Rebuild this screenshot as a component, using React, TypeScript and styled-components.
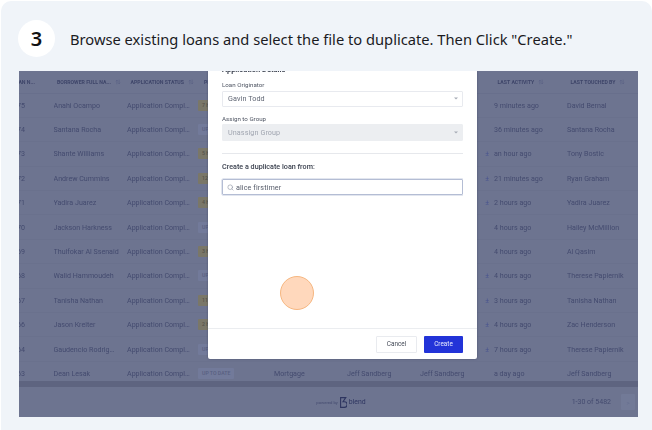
import React from 'react'
import styled, { createGlobalStyle } from 'styled-components'
import { Search } from 'lucide-react'

const GlobalStyle = createGlobalStyle`
  html, body {
    margin: 0;
    padding: 0;
    background: #ffffff;
  }
`

const COLUMNS = '34.5px 73.5px 71px 76px 73px 73px 74px 73px 71px'

type Loan = {
  id: string
  name: string
  pill: string
  warn?: boolean
  activity: string
  touched: string
  file?: boolean
}

const loans: Loan[] = [
  { id: '5475', name: 'Anahi Ocampo', pill: '7 HOURS', warn: true, activity: '9 minutes ago', touched: 'David Bernal' },
  { id: '5474', name: 'Santana Rocha', pill: 'UP TO DATE', activity: '36 minutes ago', touched: 'Santana Rocha' },
  { id: '5473', name: 'Shante Williams', pill: '5 HOURS', warn: true, activity: 'an hour ago', touched: 'Tony Bostic', file: true },
  { id: '5472', name: 'Andrew Cummins', pill: '12 HOURS', warn: true, activity: '21 minutes ago', touched: 'Ryan Graham', file: true },
  { id: '5471', name: 'Yadira Juarez', pill: '4 HOURS', warn: true, activity: '2 hours ago', touched: 'Yadira Juarez', file: true },
  { id: '5470', name: 'Jackson Harkness', pill: 'UP TO DATE', activity: '4 hours ago', touched: 'Hailey McMillion' },
  { id: '5469', name: 'Thulfokar Al Ssenaid', pill: '3 HOURS', warn: true, activity: '4 hours ago', touched: 'Al Qasim' },
  { id: '5468', name: 'Walid Hammoudeh', pill: 'UP TO DATE', activity: '4 hours ago', touched: 'Therese Papiernik', file: true },
  { id: '5467', name: 'Tanisha Nathan', pill: '11 HOURS', warn: true, activity: '3 hours ago', touched: 'Tanisha Nathan', file: true },
  { id: '5466', name: 'Jason Kreiter', pill: '2 HOURS', warn: true, activity: '4 hours ago', touched: 'Zac Henderson', file: true },
  { id: '5464', name: 'Gaudencio Rodrig…', pill: 'UP TO DATE', activity: '7 hours ago', touched: 'Therese Papiernik', file: true },
  { id: '5463', name: 'Dean Lesak', pill: 'UP TO DATE', activity: 'a day ago', touched: 'Jeff Sandberg' },
]

const SortIcon = () => (
  <svg width="6" height="6" viewBox="0 0 8 8" fill="none" stroke="#5a6184" strokeWidth="0.9">
    <path d="M2.5 7V1.5M1 3l1.5-1.5L4 3M5.5 1v5.5M4 5l1.5 1.5L7 5" />
  </svg>
)

const BlendMark = () => (
  <svg width="7" height="11" viewBox="0 0 7 11" fill="none" stroke="#2e3560" strokeWidth="1.1">
    <path d="M.6.6h5.2L3 4.8h1.3a2.8 2.8 0 0 1 0 5.6H.6V.6z" />
  </svg>
)

const Caret = () => (
  <svg width="4" height="3" viewBox="0 0 4 3" fill="#a6abb5">
    <path d="M0 0.5h4L2 2.5z" />
  </svg>
)

export default function App() {
  return (
    <>
      <GlobalStyle />
      <Card>
        <Header>
          <StepBadge>3</StepBadge>
          <Title>Browse existing loans and select the file to duplicate. Then Click "Create."</Title>
        </Header>
        <Shot>
          <Table>
            <HeadRow>
              <IdHead>LOAN N...</IdHead>
              <HeadCell $inset={3.5}>BORROWER FULL NA... <SortIcon /></HeadCell>
              <HeadCell $inset={3.5}>APPLICATION STATUS <SortIcon /></HeadCell>
              <HeadCell $inset={6}>PIPELINE</HeadCell>
              <HeadCell />
              <HeadCell />
              <HeadCell />
              <HeadCell $inset={3.5}>LAST ACTIVITY <SortIcon /></HeadCell>
              <HeadCell $inset={3.5}>LAST TOUCHED BY <SortIcon /></HeadCell>
            </HeadRow>
            {loans.map((loan) => (
              <Row key={loan.id}>
                <IdCell>{loan.id}</IdCell>
                <Cell>{loan.name}</Cell>
                <Cell>Application Compl…</Cell>
                <Cell><Pill $warn={loan.warn}>{loan.pill}</Pill></Cell>
                <Cell>Mortgage</Cell>
                <Cell>Jeff Sandberg</Cell>
                <FileCell>
                  <span>{loan.file ? '…' : 'Jeff Sandberg'}</span>
                  {loan.file && <FileMark>±</FileMark>}
                </FileCell>
                <Cell>{loan.activity}</Cell>
                <Cell>{loan.touched}</Cell>
              </Row>
            ))}
          </Table>
          <ScrollBar />
          <Footer>
            <Powered>
              <PoweredBy>powered by</PoweredBy>
              <BlendMark />
              <BlendName>blend</BlendName>
            </Powered>
            <Pager>
              <span>1-30 of 5482</span>
              <PageButton>{'>'}</PageButton>
            </Pager>
          </Footer>
          <Modal>
            <ModalBody>
              <SectionHead>Application Details</SectionHead>
              <FieldLabel>Loan Originator</FieldLabel>
              <Select>Gavin Todd<Caret /></Select>
              <FieldLabel>Assign to Group</FieldLabel>
              <Select $disabled>Unassign Group<Caret /></Select>
              <Divider />
              <DuplicateLabel>Create a duplicate loan from:</DuplicateLabel>
              <SearchBox>
                <Search size={7} color="#8a90a0" strokeWidth={2} />
                alice firstimer
              </SearchBox>
            </ModalBody>
            <ModalFooter>
              <CancelButton>Cancel</CancelButton>
              <CreateButton>Create</CreateButton>
            </ModalFooter>
          </Modal>
          <ClickMarker />
        </Shot>
      </Card>
    </>
  )
}

const Card = styled.div`
  width: 651px;
  height: 429px;
  margin: 1px 0 0 1px;
  box-sizing: border-box;
  padding: 0 14px 0 17px;
  background: #f0f4f9;
  border-radius: 10px 10px 0 0;
  overflow: hidden;
`
const Header = styled.div`
  height: 70px;
  display: flex;
  align-items: center;
  gap: 15px;
  padding-top: 5px;
  box-sizing: border-box;
`
const StepBadge = styled.div`
  width: 37px;
  height: 37px;
  flex: none;
  border-radius: 50%;
  background: #ffffff;
  display: flex;
  align-items: center;
  justify-content: center;
  font-family: "Noto Sans", sans-serif;
  font-size: 20px;
  font-weight: 600;
  color: #111111;
`
const Title = styled.div`
  font-family: "Noto Sans", sans-serif;
  font-size: 14.7px;
  color: #1b1b1f;
  white-space: nowrap;
`
const Shot = styled.div`
  position: relative;
  width: 619px;
  height: 346px;
  margin-left: 1px;
  background: #6d7490;
  overflow: hidden;
  display: flex;
  flex-direction: column;
  font-family: Roboto, sans-serif;
  color: #444b6f;
`
const Table = styled.div`
  height: 310px;
  flex: none;
  overflow: hidden;
  display: flex;
  flex-direction: column;
  filter: blur(0.4px);
`
const HeadRow = styled.div`
  height: 22.5px;
  flex: none;
  display: grid;
  grid-template-columns: ${COLUMNS};
  align-items: center;
  border-bottom: 1px solid #686f8c;
  box-sizing: border-box;
`
const HeadCell = styled.div<{ $inset?: number }>`
  font-size: 5.2px;
  font-weight: 700;
  white-space: nowrap;
  overflow: hidden;
  display: flex;
  align-items: center;
  gap: 4px;
  padding-left: ${(p) => p.$inset ?? 0}px;
  color: #3e4569;
`
const IdHead = styled(HeadCell)`
  justify-content: flex-end;
  width: 16px;
`
const Row = styled.div`
  height: 24.4px;
  flex: none;
  display: grid;
  grid-template-columns: ${COLUMNS};
  align-items: center;
  border-bottom: 1px solid #6a718d;
  box-sizing: border-box;
`
const Cell = styled.div`
  font-size: 7.1px;
  white-space: nowrap;
  overflow: hidden;
`
const IdCell = styled(Cell)`
  display: flex;
  justify-content: flex-end;
  width: 6px;
`
const FileCell = styled(Cell)`
  display: flex;
  justify-content: space-between;
  padding-right: 5px;
`
const FileMark = styled.span`
  color: #47528f;
`
const Pill = styled.span<{ $warn?: boolean }>`
  display: inline-block;
  padding: 0 4px;
  height: 11px;
  line-height: 11px;
  border-radius: 1px;
  font-size: 5.2px;
  font-weight: 500;
  background: ${(p) => (p.$warn ? '#7a7768' : '#727a9a')};
  color: ${(p) => (p.$warn ? '#55524a' : '#585f80')};
`
const ScrollBar = styled.div`
  height: 6px;
  flex: none;
  background: #5e6480;
`
const Footer = styled.div`
  flex: 1;
  display: flex;
  align-items: center;
  justify-content: flex-end;
  padding-right: 3px;
  font-size: 7px;
  filter: blur(0.4px);
`
const Powered = styled.div`
  display: flex;
  align-items: center;
  gap: 2px;
  margin-right: 206px;
`
const PoweredBy = styled.span`
  font-size: 4.2px;
`
const BlendName = styled.span`
  font-size: 6.9px;
  color: #2e3560;
`
const Pager = styled.div`
  display: flex;
  align-items: center;
  gap: 10px;
`
const PageButton = styled.div`
  width: 14px;
  height: 16px;
  border-radius: 1px;
  background: #727a97;
  display: flex;
  align-items: center;
  justify-content: center;
  font-size: 6px;
  color: #666e8f;
`
const Modal = styled.div`
  position: absolute;
  top: 0;
  left: 188.5px;
  width: 269.5px;
  height: 288px;
  background: #ffffff;
  border-radius: 0 0 2px 2px;
  box-shadow: 0 0 2px rgba(50, 55, 80, 0.6);
  display: flex;
  flex-direction: column;
  overflow: hidden;
`
const ModalBody = styled.div`
  flex: 1;
  margin-top: -6px;
  padding: 0 14.5px;
  display: flex;
  flex-direction: column;
  color: #3c4250;
  filter: blur(0.25px);
`
const SectionHead = styled.div`
  font-size: 7.5px;
  font-weight: 700;
  height: 10px;
  line-height: 10px;
  margin-bottom: 5px;
`
const FieldLabel = styled.div`
  font-size: 6.2px;
  height: 10px;
  line-height: 10px;
  margin-bottom: 0.5px;
  color: #505664;
`
const Select = styled.div<{ $disabled?: boolean }>`
  height: 16.5px;
  flex: none;
  box-sizing: border-box;
  border: 1px solid ${(p) => (p.$disabled ? '#eceef1' : '#e8eaef')};
  border-radius: 1px;
  background: ${(p) => (p.$disabled ? '#eceef1' : '#ffffff')};
  color: ${(p) => (p.$disabled ? '#a0a5b0' : '#606674')};
  font-size: 7.2px;
  letter-spacing: 0.1px;
  padding: 0 4px 0 5px;
  display: flex;
  align-items: center;
  justify-content: space-between;
  margin-bottom: 6.5px;
`
const Divider = styled.div`
  height: 1px;
  flex: none;
  background: #e6e8ec;
  margin: 6px 0 8px;
`
const DuplicateLabel = styled.div`
  font-size: 7.2px;
  font-weight: 500;
  height: 10px;
  line-height: 10px;
  margin-bottom: 7px;
  color: #3a404e;
`
const SearchBox = styled.div`
  height: 16px;
  flex: none;
  box-sizing: border-box;
  border: 1px solid #b4bdd4;
  border-radius: 1px;
  box-shadow: 0 0 0 0.5px #c6cde0;
  font-size: 7.2px;
  letter-spacing: 0.1px;
  color: #565c6a;
  padding: 0 4px;
  display: flex;
  align-items: center;
  gap: 2px;
`
const ModalFooter = styled.div`
  height: 31px;
  flex: none;
  box-sizing: border-box;
  border-top: 1px solid #ebedf0;
  padding: 0 14px 0 0;
  display: flex;
  align-items: center;
  justify-content: flex-end;
  gap: 7px;
`
const CancelButton = styled.div`
  width: 41px;
  height: 17px;
  box-sizing: border-box;
  border: 1px solid #e9ebef;
  border-radius: 1px;
  font-size: 6.4px;
  color: #454b58;
  display: flex;
  align-items: center;
  justify-content: center;
`
const CreateButton = styled(CancelButton)`
  width: 39px;
  border: none;
  background: #2233d8;
  color: #e8ebff;
`
const ClickMarker = styled.div`
  position: absolute;
  left: 261px;
  top: 205px;
  width: 34px;
  height: 34px;
  box-sizing: border-box;
  border-radius: 50%;
  background: #ffd8bc;
  border: 1.5px solid #f6b781;
`
